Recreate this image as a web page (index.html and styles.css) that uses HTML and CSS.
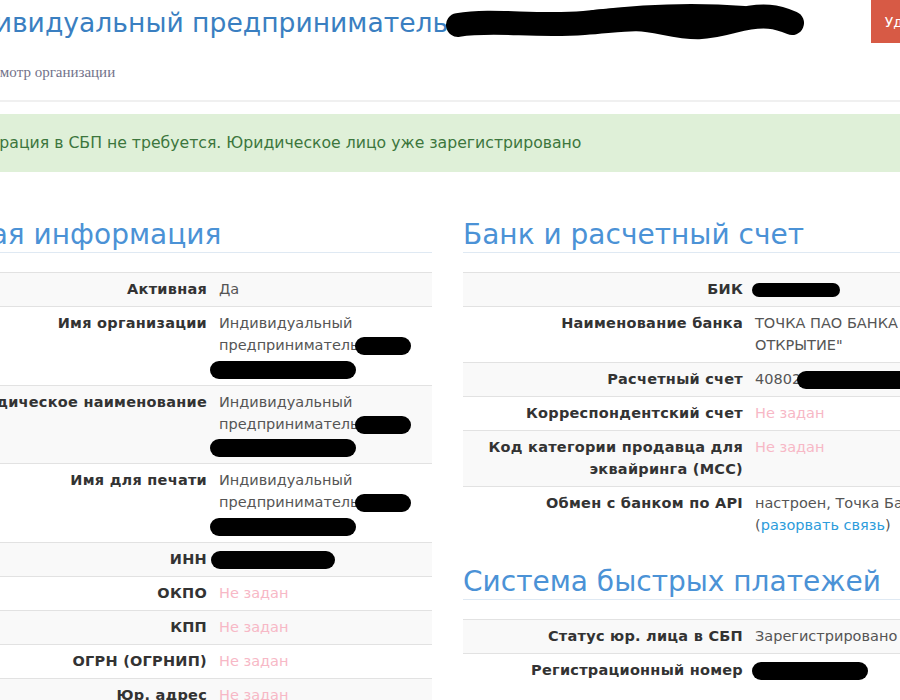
FILE: index.html
```html
<!DOCTYPE html>
<html lang="ru">
  <head>
    <meta charset="UTF-8" />
    <meta name="viewport" content="width=device-width, initial-scale=1.0" />
    <title>Просмотр организации</title>
    <link rel="stylesheet" href="styles.css">
  </head>
  <body>
    <div class="page">
      <header class="page-header">
        <h1 class="org-title">
          Индивидуальный предприниматель
          <svg class="blot-title" width="364" height="40" viewBox="0 0 364 40">
            <path d="M14 22 C 50 16, 90 24, 140 20 S 190 14, 220 20 S 260 26, 290 18 S 334 14, 348 20" stroke="#000" stroke-width="24" stroke-linecap="round" fill="none" />
            <path d="M150 16 C 200 10, 250 8, 300 12" stroke="#000" stroke-width="18" stroke-linecap="round" fill="none" />
          </svg>
        </h1>
        <button class="btn-delete">Удалить</button>
      </header>

      <div class="breadcrumb">Просмотр организации</div>
      <hr class="divider" />

      <div class="alert-success">
        Регистрация в СБП не требуется. Юридическое лицо уже зарегистрировано
      </div>

      <div class="columns">
        <!-- Main info -->
        <section class="col">
          <h2 class="section-title">Основная информация</h2>
          <table class="info-table info-table--main">
            <tr>
              <th>Активная</th>
              <td>Да</td>
            </tr>
            <tr>
              <th>Имя организации</th>
              <td>Индивидуальный предприниматель<span class="blot blot-tail"></span><span class="blot blot-line"></span></td>
            </tr>
            <tr>
              <th>Юридическое наименование</th>
              <td>Индивидуальный предприниматель<span class="blot blot-tail"></span><span class="blot blot-line"></span></td>
            </tr>
            <tr>
              <th>Имя для печати</th>
              <td>Индивидуальный предприниматель<span class="blot blot-tail"></span><span class="blot blot-line"></span></td>
            </tr>
            <tr>
              <th>ИНН</th>
              <td><span class="blot blot-inn"></span></td>
            </tr>
            <tr>
              <th>ОКПО</th>
              <td class="empty">Не задан</td>
            </tr>
            <tr>
              <th>КПП</th>
              <td class="empty">Не задан</td>
            </tr>
            <tr>
              <th>ОГРН (ОГРНИП)</th>
              <td class="empty">Не задан</td>
            </tr>
            <tr>
              <th>Юр. адрес</th>
              <td class="empty">Не задан</td>
            </tr>
          </table>
        </section>

        <!-- Bank -->
        <section class="col">
          <h2 class="section-title">Банк и расчетный счет</h2>
          <table class="info-table info-table--bank">
            <tr>
              <th>БИК</th>
              <td><span class="blot blot-bik"></span></td>
            </tr>
            <tr>
              <th>Наименование банка</th>
              <td>ТОЧКА ПАО БАНКА "ФК ОТКРЫТИЕ"</td>
            </tr>
            <tr>
              <th>Расчетный счет</th>
              <td>40802<span class="blot blot-acc"></span></td>
            </tr>
            <tr>
              <th>Корреспондентский счет</th>
              <td class="empty">Не задан</td>
            </tr>
            <tr>
              <th>Код категории продавца для эквайринга (MCC)</th>
              <td class="empty">Не задан</td>
            </tr>
            <tr>
              <th>Обмен с банком по API</th>
              <td>настроен, Точка Банк<br />(<a href="#" class="link">разорвать связь</a>)</td>
            </tr>
          </table>

          <h2 class="section-title section-title--next">Система быстрых платежей</h2>
          <table class="info-table info-table--bank">
            <tr>
              <th>Статус юр. лица в СБП</th>
              <td>Зарегистрировано</td>
            </tr>
            <tr>
              <th>Регистрационный номер</th>
              <td><span class="blot blot-reg"></span></td>
            </tr>
          </table>
        </section>
      </div>
    </div>
  </body>
</html>
```

FILE: styles.css
```css
body {
  margin: 0;
  padding: 0;
  font-family: "DejaVu Sans", Verdana, sans-serif;
  font-size: 14.5px;
  color: #555;
  background-color: #fff;
  overflow: hidden;
}

.page {
  margin-left: -117px;
  width: 1129px;
}

/* Header */
.page-header {
  display: flex;
  justify-content: space-between;
  align-items: flex-start;
}

.org-title {
  margin: 1px 0 0 56px;
  font-size: 26.6px;
  font-weight: normal;
  line-height: 43px;
  color: #3a7fc1;
  white-space: nowrap;
  display: flex;
  align-items: center;
}

.blot-title {
  margin-left: -4px;
}

.btn-delete {
  margin-right: 52px;
  height: 43px;
  padding: 0 14px;
  border: none;
  background-color: #d75a45;
  color: #fff;
  font-family: inherit;
  font-size: 14px;
}

.breadcrumb {
  margin: 18px 0 0 84px;
  font-family: "Liberation Serif", "Times New Roman", serif;
  font-size: 15px;
  line-height: 20px;
  color: #72728a;
}

.divider {
  margin: 18px 0 0;
  border: none;
  border-top: 2px solid #f0f0f0;
}

.alert-success {
  margin: 12px 0 48px 46px;
  padding: 18px 15px;
  background-color: #dff0d8;
  color: #3c763d;
  font-size: 15.7px;
  line-height: 22px;
}

/* Columns */
.columns {
  display: flex;
  gap: 31px;
}

.col {
  width: 549px;
}

.section-title {
  margin: 0 0 19px;
  padding-bottom: 2px;
  border-bottom: 1px solid #dfe9f3;
  font-size: 28px;
  font-weight: normal;
  line-height: 30px;
  color: #4b92d6;
}

.section-title--next {
  margin-top: 25px;
}

/* Tables */
.info-table {
  width: 100%;
  border-collapse: collapse;
  table-layout: fixed;
}

.info-table tr:nth-child(odd) {
  background-color: #f9f9f9;
}

.info-table th,
.info-table td {
  padding: 5px 6px 6px;
  border-top: 1px solid #e2e2e2;
  line-height: 22px;
  vertical-align: top;
  text-align: left;
}

.info-table th {
  box-sizing: border-box;
  text-align: right;
  font-weight: bold;
  letter-spacing: 0.25px;
  color: #333;
}

.info-table--main th {
  width: 330px;
}

.info-table--bank th {
  width: 286px;
}

.info-table td.empty {
  color: #f7b8c6;
}

.link {
  color: #2d9cdb;
  text-decoration: none;
}

/* Redactions */
.blot {
  display: inline-block;
  background-color: #000;
  border-radius: 12px;
  vertical-align: middle;
}

.blot-tail {
  width: 56px;
  height: 18px;
  margin-left: -4px;
}

.blot-line {
  width: 146px;
  height: 18px;
  margin-left: -9px;
  margin-top: 3px;
}

.blot-inn {
  width: 124px;
  height: 18px;
  margin-left: -8px;
}

.blot-bik {
  width: 88px;
  height: 14px;
  margin-left: -3px;
}

.blot-acc {
  width: 130px;
  height: 18px;
  margin-left: -4px;
}

.blot-reg {
  width: 116px;
  height: 18px;
  margin-left: -3px;
}
```
